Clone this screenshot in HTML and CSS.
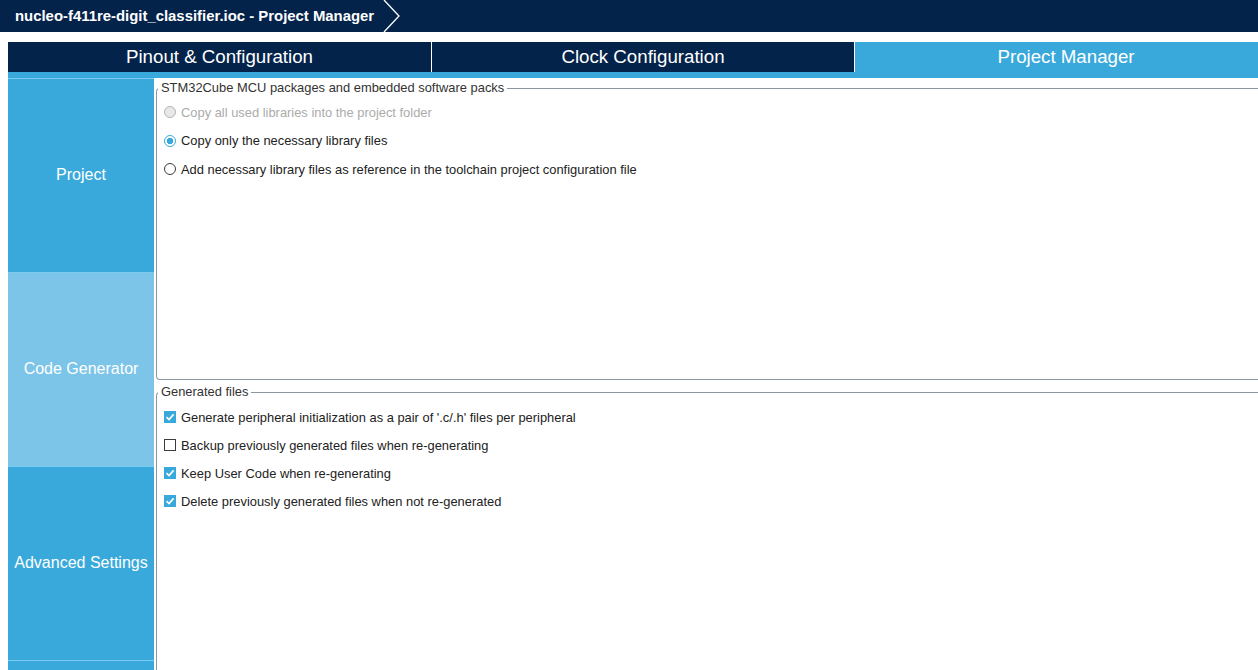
FILE: index.html
```html
<!DOCTYPE html>
<html lang="en">
<head>
<meta charset="utf-8">
<title>Project Manager</title>
<link rel="stylesheet" href="styles.css">
</head>
<body>
<header class="titlebar">
  <span class="title">nucleo-f411re-digit_classifier.ioc - Project Manager</span>
  <svg class="chev" width="18" height="32" viewBox="0 0 18 32"><polyline points="1,0 16,16 1,32" fill="none" stroke="#ffffff" stroke-width="1.3"/></svg>
</header>
<div class="app">
  <nav class="tabs">
    <div class="tab">Pinout &amp; Configuration</div>
    <div class="tab sep">Clock Configuration</div>
    <div class="tab sep active">Project Manager</div>
  </nav>
  <div class="body">
    <aside class="side">
      <div class="item">Project</div>
      <div class="item selected">Code Generator</div>
      <div class="item">Advanced Settings</div>
      <div class="item"></div>
    </aside>
    <main class="content">
      <fieldset class="group group-packs">
        <legend>STM32Cube MCU packages and embedded software packs</legend>
        <div class="opt disabled"><span class="radio off-disabled"></span>Copy all used libraries into the project folder</div>
        <div class="opt"><span class="radio on"></span>Copy only the necessary library files</div>
        <div class="opt"><span class="radio"></span>Add necessary library files as reference in the toolchain project configuration file</div>
      </fieldset>
      <fieldset class="group group-files">
        <legend>Generated files</legend>
        <div class="opt"><span class="check on"><svg width="12" height="12" viewBox="0 0 12 12"><polyline points="2.5,6.2 5,8.6 9.6,3.4" fill="none" stroke="#fff" stroke-width="1.6"/></svg></span>Generate peripheral initialization as a pair of '.c/.h' files per peripheral</div>
        <div class="opt"><span class="check"></span>Backup previously generated files when re-generating</div>
        <div class="opt"><span class="check on"><svg width="12" height="12" viewBox="0 0 12 12"><polyline points="2.5,6.2 5,8.6 9.6,3.4" fill="none" stroke="#fff" stroke-width="1.6"/></svg></span>Keep User Code when re-generating</div>
        <div class="opt"><span class="check on"><svg width="12" height="12" viewBox="0 0 12 12"><polyline points="2.5,6.2 5,8.6 9.6,3.4" fill="none" stroke="#fff" stroke-width="1.6"/></svg></span>Delete previously generated files when not re-generated</div>
      </fieldset>
    </main>
  </div>
</div>
</body>
</html>
```

FILE: styles.css
```css
html, body {
  margin: 0;
  padding: 0;
  background: #ffffff;
  overflow: hidden;
  height: 670px;
}
body {
  font-family: "Liberation Sans", Arial, sans-serif;
}
.titlebar {
  height: 32px;
  background: #03234b;
  display: flex;
  align-items: center;
  padding-left: 15px;
}
.title {
  color: #ffffff;
  font-weight: bold;
  font-size: 14.9px;
  white-space: nowrap;
}
.chev {
  margin-left: 9px;
  flex: none;
}
.app {
  margin-top: 10px;
  padding-left: 8px;
}
.tabs {
  display: flex;
  height: 30px;
  border-bottom: 6px solid #39a9dc;
  overflow: hidden;
}
.tab {
  flex: none;
  width: 423px;
  box-sizing: border-box;
  background: #03234b;
  color: #ffffff;
  font-size: 18.7px;
  display: flex;
  align-items: center;
  justify-content: center;
}
.tab.sep {
  border-left: 1px solid #ffffff;
}
.tab.active {
  background: #39a9dc;
}
.body {
  display: flex;
  gap: 2px;
  height: 592px;
  overflow: hidden;
}
.side {
  flex: none;
  width: 146px;
  display: flex;
  flex-direction: column;
}
.item {
  flex: none;
  height: 194px;
  box-sizing: border-box;
  border-top: 1px solid #7ccbf0;
  padding-bottom: 2px;
  background: #39a9dc;
  color: #ffffff;
  font-size: 16px;
  display: flex;
  align-items: center;
  justify-content: center;
  white-space: nowrap;
}
.item.selected {
  background: #7cc5e9;
}
.content {
  flex: 1;
  min-width: 0;
  padding-top: 3px;
  display: flex;
  flex-direction: column;
  gap: 5px;
}
.group {
  margin: 0;
  min-width: 0;
  box-sizing: border-box;
  border: 1px solid #8e979e;
  border-right: none;
  border-radius: 4px 0 0 4px;
  padding: 3px 0 0 7px;
  flex: none;
}
.group-packs {
  height: 299px;
}
.group-packs .opt {
  height: 28.5px;
}
.group-files {
  height: 300px;
  padding-top: 4px;
}
legend {
  font-size: 12.9px;
  line-height: 14px;
  color: #333333;
  padding: 0 3px;
  margin-left: -6px;
}
.opt {
  height: 28px;
  display: flex;
  align-items: center;
  gap: 5px;
  font-size: 12.9px;
  color: #222222;
  white-space: nowrap;
}
.opt.disabled {
  color: #ababab;
}
.radio {
  flex: none;
  width: 12px;
  height: 12px;
  box-sizing: border-box;
  border-radius: 50%;
  border: 1px solid #3c3c3c;
  background: #ffffff;
}
.radio.off-disabled {
  border-color: #b4b4b4;
  background: #e8e8e8;
}
.radio.on {
  border-color: #39a9dc;
  background: radial-gradient(circle, #39a9dc 0, #39a9dc 3px, #ffffff 3.5px);
}
.check {
  flex: none;
  width: 12px;
  height: 12px;
  box-sizing: border-box;
  border: 1px solid #3c3c3c;
  background: #ffffff;
  display: flex;
}
.check.on {
  border: none;
  background: #39a9dc;
}
```
